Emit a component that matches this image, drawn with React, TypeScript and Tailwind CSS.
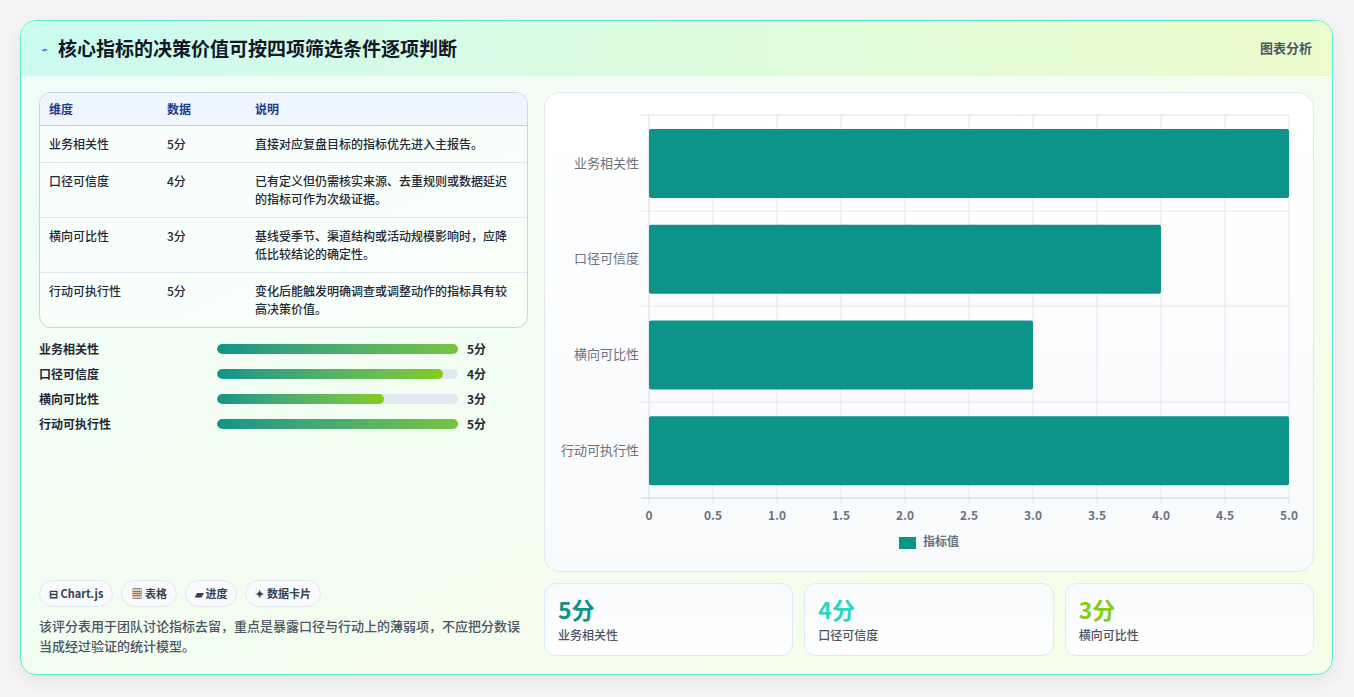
import React from "react"

const rows = [
  { name: "业务相关性", score: 5, desc: "直接对应复盘目标的指标优先进入主报告。" },
  { name: "口径可信度", score: 4, desc: "已有定义但仍需核实来源、去重规则或数据延迟的指标可作为次级证据。" },
  { name: "横向可比性", score: 3, desc: "基线受季节、渠道结构或活动规模影响时，应降低比较结论的确定性。" },
  { name: "行动可执行性", score: 5, desc: "变化后能触发明确调查或调整动作的指标具有较高决策价值。" },
]

const font = { fontFamily: '"Noto Sans CJK SC", "Noto Sans", sans-serif' }

const Chart = () => {
  const x0 = 104
  const unit = 128
  const ticks = [0, 0.5, 1, 1.5, 2, 2.5, 3, 3.5, 4, 4.5, 5]
  return (
    <svg width="768" height="479" viewBox="0 0 768 479" className="block">
      {ticks.map((t, i) => (
        <line key={i} x1={x0 + t * unit} x2={x0 + t * unit} y1={22} y2={411} stroke="#e5e7eb" strokeWidth="1" />
      ))}
      {[22, 118, 213, 309].map((y) => (
        <line key={y} x1={96} x2={744} y1={y} y2={y} stroke="#e5e7eb" strokeWidth="1" />
      ))}
      <line x1={96} x2={744} y1={405} y2={405} stroke="#cbd5e1" strokeWidth="1" />
      <line x1={x0} x2={x0} y1={22} y2={405} stroke="#e5e7eb" strokeWidth="1" />
      {rows.map((r, i) => (
        <g key={r.name}>
          <rect x={x0} y={36 + i * 95.75} width={r.score * unit} height={69} rx="2" fill="#0d9488" />
          <text x={94} y={71 + i * 95.75} textAnchor="end" dominantBaseline="middle" fontSize="13" fill="#6b7280" style={font}>
            {r.name}
          </text>
        </g>
      ))}
      {ticks.map((t, i) => (
        <text key={i} x={x0 + t * unit} y={424} textAnchor="middle" dominantBaseline="middle" fontSize="12" fontWeight="700" fill="#6b7280" style={font}>
          {i === 0 ? "0" : t.toFixed(1)}
        </text>
      ))}
      <rect x={354} y={444} width={17} height={12} fill="#0d9488" />
      <text x={378} y={450} dominantBaseline="middle" fontSize="12" fontWeight="700" fill="#6b7280" style={font}>
        指标值
      </text>
    </svg>
  )
}

const App = () => {
  return (
    <div className="w-[1354px] h-[697px] bg-[#f5f5f5] pt-5 pl-5" style={font}>
      <div className="w-[1313px] h-[655px] rounded-2xl border border-[#5eead4] overflow-hidden shadow-[0_6px_20px_rgba(0,0,0,0.08)] bg-gradient-to-br from-[#effdfa] to-[#f7fee7] flex flex-col">
        <div className="h-[56px] flex items-center justify-between px-5 bg-gradient-to-r from-[#ccfbf1] to-[#ecfccb] border-b border-[#d9f7ea]">
          <div className="flex items-center gap-2.5">
            <span className="text-[#2563eb] text-[11px] -rotate-12">⌁</span>
            <h1 className="text-[19px] font-bold text-[#111827]">核心指标的决策价值可按四项筛选条件逐项判断</h1>
          </div>
          <span className="text-[13px] font-semibold text-[#4b5563]">图表分析</span>
        </div>
        <div className="flex-1 flex gap-4 px-[18px] pt-4 pb-[18px]">
          <div className="w-[491px] flex flex-col">
            <div className="rounded-xl border border-[#cbd5e1] overflow-hidden bg-white/50">
              <div className="grid grid-cols-[118px_88px_1fr] h-[33px] items-center px-[9px] bg-[#eff6ff] border-b border-[#cbd5e1] text-[12px] font-bold text-[#1e3a8a]">
                <span>维度</span><span>数据</span><span>说明</span>
              </div>
              {rows.map((r, i) => (
                <div key={r.name} className={`grid grid-cols-[118px_88px_1fr] px-[9px] py-[9px] text-[12px] font-medium text-[#1f2937] leading-[18px] ${i < 3 ? "border-b border-[#e2e8f0]" : ""} ${i === 0 ? "py-[8px]" : ""}`}>
                  <span>{r.name}</span><span>{r.score}分</span><span className="pr-1">{r.desc}</span>
                </div>
              ))}
            </div>
            <div className="mt-[12px] flex flex-col gap-[7px]">
              {rows.map((r) => (
                <div key={r.name} className="flex items-center h-[18px] text-[12px] font-semibold text-[#1f2937]">
                  <span className="w-[178px]">{r.name}</span>
                  <div className="w-[241px] h-[10px] rounded-full bg-[#e2e8f0] overflow-hidden">
                    <div className="h-full rounded-full bg-gradient-to-r from-[#0d9488] to-[#84cc16]" style={{ width: `${r.score * 24.4 - 4}%` }} />
                  </div>
                  <span className="ml-[9px] font-bold">{r.score}分</span>
                </div>
              ))}
            </div>
            <div className="mt-auto flex gap-2 text-[11px] font-bold text-[#374151]">
              {["⊟ Chart.js", "▦ 表格", "▰ 进度", "✦ 数据卡片"].map((c) => (
                <span key={c} className="h-[27px] px-[9px] flex items-center rounded-full border border-[#e2e8f0] bg-[#f8fafc]">{c}</span>
              ))}
            </div>
            <p className="mt-[9px] text-[13px] leading-[20px] font-medium text-[#4b5563]">
              该评分表用于团队讨论指标去留，重点是暴露口径与行动上的薄弱项，不应把分数误当成经过验证的统计模型。
            </p>
          </div>
          <div className="flex-1 flex flex-col gap-[11px]">
            <div className="h-[480px] rounded-2xl border border-[#e2e8f0] bg-gradient-to-b from-white to-[#f8fafc] overflow-hidden">
              <Chart />
            </div>
            <div className="grid grid-cols-3 gap-[11px]">
              {[
                { v: "5分", l: "业务相关性", c: "text-[#0d9488]" },
                { v: "4分", l: "口径可信度", c: "text-[#2dd4bf]" },
                { v: "3分", l: "横向可比性", c: "text-[#84cc16]" },
              ].map((s) => (
                <div key={s.l} className="h-[73px] rounded-xl border border-[#dbeafe] bg-gradient-to-b from-[#f8fafc] to-white px-[13px] pt-[10px]">
                  <div className={`text-[23px] font-bold leading-[30px] ${s.c}`}>{s.v}</div>
                  <div className="text-[12px] font-medium text-[#4b5563] mt-[2px]">{s.l}</div>
                </div>
              ))}
            </div>
          </div>
        </div>
      </div>
    </div>
  )
}

export default App
